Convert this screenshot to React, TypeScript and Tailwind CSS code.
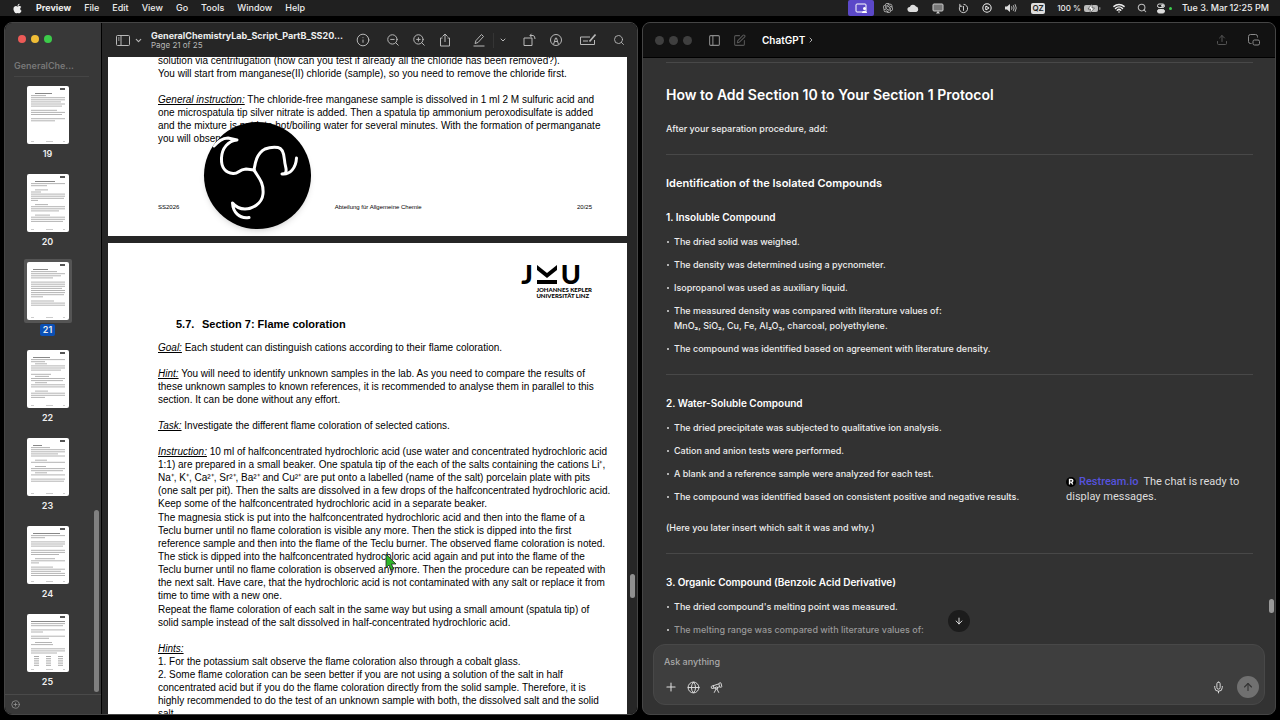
import React, { useState } from "react";
import {
  ArrowDown,
  ArrowUp,
  ChevronDown,
  ChevronRight,
  CirclePlus,
  CirclePlay,
  Globe,
  Info,
  Mic,
  PanelLeft,
  Plus,
  Search,
  SquarePen,
  Telescope,
  Upload,
  Wifi,
  ZoomIn,
  ZoomOut,
} from "lucide-react";
import { FaApple } from "react-icons/fa";
import { RiOpenaiFill } from "react-icons/ri";

const menus = ["File", "Edit", "View", "Go", "Tools", "Window", "Help"];

// Each row is [indent, width], stacked from the top of the miniature page
const thumbs: { page: number; rows: number[][] }[] = [
  { page: 19, rows: [[8, 17], [4, 15], [4, 34], [4, 34], [4, 30], [4, 34], [4, 31], [0, 0], [4, 26], [4, 34], [4, 31], [0, 0], [4, 34], [4, 24]] },
  { page: 20, rows: [[8, 20], [4, 34], [4, 16], [0, 0], [8, 13], [4, 10], [4, 34], [4, 34], [4, 33], [4, 7], [0, 0], [8, 13], [4, 34], [4, 34], [4, 28], [0, 0], [8, 15], [4, 34], [4, 34], [4, 32]] },
  { page: 21, rows: [[6, 15], [4, 26], [4, 34], [4, 30], [4, 22], [0, 0], [4, 34], [4, 34], [4, 34], [4, 31], [4, 34], [4, 34], [4, 33], [4, 12], [0, 0], [4, 23], [4, 34], [4, 34]] },
  { page: 22, rows: [[6, 17], [4, 34], [4, 14], [8, 12], [4, 34], [4, 34], [4, 30], [0, 0], [4, 20], [8, 14], [4, 34], [4, 32], [8, 12], [4, 34], [4, 34], [0, 0], [8, 13], [4, 34], [4, 34], [4, 14]] },
  { page: 23, rows: [[6, 9], [4, 19], [4, 34], [4, 34], [4, 27], [4, 34], [0, 0], [8, 12], [4, 34], [0, 0], [8, 11], [4, 34], [4, 32], [8, 12], [4, 34], [0, 0], [4, 34], [4, 33]] },
  { page: 24, rows: [[6, 27], [4, 34], [4, 14], [0, 0], [4, 34], [4, 34], [4, 32], [0, 0], [4, 34], [4, 34], [4, 28], [0, 0], [8, 20], [4, 34], [4, 8], [0, 0], [4, 22], [4, 34], [4, 30], [4, 34], [4, 34]] },
  { page: 25, rows: [[4, 34], [4, 34], [4, 32], [0, 0], [4, 34], [4, 12], [0, 0], [4, 34], [4, 18], [0, 0], [8, 17], [4, 22], [0, 0], [4, 34], [4, 34], [4, 26]] },
];

function Thumb({ page, rows }: { page: number; rows: number[][] }) {
  return (
    <svg className="block h-[58px] w-[42px] rounded-xs bg-white" viewBox="0 0 42 58">
      <rect x="33" y="2" width="5" height="2" fill="#555" />
      {rows.map(([x, w], i) => (
        <rect key={i} x={x} y={7 + i * 2.1} width={w} height="1" fill={i === 0 ? "#888" : "#b4b4b4"} />
      ))}
      {page === 25 &&
        [7, 19, 31].map((x) =>
          [0, 1, 2, 3, 4].map((i) => (
            <rect key={`${x}-${i}`} x={x} y={42 + i * 2.2} width="5" height="1" fill="#aaa" />
          ))
        )}
      <rect x="4" y="55" width="3" height="1" fill="#ccc" />
      <rect x="19" y="55" width="7" height="1" fill="#ccc" />
      <rect x="36" y="55" width="2" height="1" fill="#ccc" />
    </svg>
  );
}

function MenuBar() {
  return (
    <header className="flex h-4 shrink-0 items-center justify-between bg-[#202020] pr-[11px] pl-3 text-[9px] leading-4 font-medium text-[#eee]">
      <nav className="flex items-center gap-[13px]">
        <button aria-label="Apple menu">
          <FaApple className="size-[11px]" />
        </button>
        <button className="font-bold">Preview</button>
        {menus.map((m) => (
          <button key={m}>{m}</button>
        ))}
      </nav>
      <div className="flex items-center">
        <button aria-label="Screen sharing" className="flex h-4 w-[26px] items-center justify-center rounded-xs bg-[#5b48c8]">
          <svg className="h-3 w-3" viewBox="0 0 12 12" fill="none">
            <rect x="1" y="2" width="10" height="8" rx="1" stroke="#fff" />
            <circle cx="9.500" cy="6.500" r="1.500" fill="#fff" />
            <path d="M7 11c0-3 5-3 5 0z" fill="#fff" />
          </svg>
        </button>
        <span className="flex w-[27px] justify-center"><RiOpenaiFill className="size-[12px] text-[#ccc]" /></span>
        <span className="flex w-6 justify-center">
          <svg className="h-[10px] w-3" viewBox="0 0 12 10">
            <path d="M3 9a2.500 2.500 0 0 1-.2-5A3.400 3.400 0 0 1 9 3.600A2.800 2.800 0 0 1 9.300 9z" fill="#ddd" />
          </svg>
        </span>
        <span className="flex w-[26px] justify-center">
          <svg className="h-[11px] w-3" viewBox="0 0 12 11">
            <rect x="1" y="1" width="10" height="7" rx="1" fill="#777" stroke="#ccc" />
            <path d="M4 10.500L6 8l2 2.500z" fill="#ccc" />
          </svg>
        </span>
        <span className="flex w-6 justify-center">
          <svg className="size-[11px]" viewBox="0 0 12 12" fill="none" stroke="#ddd">
            <path d="M2.600 3A4.500 4.500 0 1 0 6 1.500M2 1v2.500h2.500" />
            <path d="M6 3.500v5M5 4.500l1-1" />
          </svg>
        </span>
        <span className="flex w-6 justify-center"><CirclePlay className="size-[10px]" strokeWidth={2.5} /></span>
        <span className="flex w-6 justify-center">
          <svg className="h-[10px] w-3" viewBox="0 0 12 10" fill="none" stroke="#ddd">
            <path d="M0 3.500h2L5 1v8L2 6.500H0z" fill="#ddd" stroke="none" />
            <path d="M6.500 3.300q1 1.700 0 3.400M8.300 2.200q1.700 2.800 0 5.600M10 1.200q2.500 3.800 0 7.600" strokeWidth=".8" />
          </svg>
        </span>
        <span className="ml-2 flex h-[11px] w-[14px] items-center justify-center rounded-xs bg-[#ddd] text-[8px] leading-none font-semibold text-[#222]">
          QZ
        </span>
        <span className="ml-3 text-[8px]">100 %</span>
        <svg className="ml-[3px] h-[9px] w-[17px]" viewBox="0 0 17 9">
          <rect x="0" y="1" width="14" height="7" rx="2" fill="#bbb" />
          <rect x="15" y="3" width="1.500" height="3" rx=".7" fill="#777" />
          <path d="M8 0L4 5h2.500L6 9l4.500-5H8z" fill="#fff" stroke="#333" strokeWidth=".6" />
        </svg>
        <Wifi className="ml-3 size-3" strokeWidth={3} />
        <Search className="ml-3 size-[10px] text-[#bbb]" strokeWidth={2.5} />
        <svg className="ml-[10px] h-[11px] w-2" viewBox="0 0 8 11" fill="none" stroke="#ddd">
          <rect x=".5" y="1" width="7" height="3.500" rx="1.700" />
          <circle cx="5.500" cy="2.700" r="1" fill="#ddd" />
          <rect x=".5" y="6.500" width="7" height="3.500" rx="1.700" fill="#ddd" />
        </svg>
        <span className="ml-1 size-[3px] rounded-full bg-[#3ccf4e]" />
        <time className="ml-[10px] flex gap-[2px]">
          <span>Tue 3. Mar</span>
          <span>12:25 PM</span>
        </time>
      </div>
    </header>
  );
}

function Sidebar() {
  const [selected, setSelected] = useState(21);
  return (
    <aside className="relative flex w-[97px] shrink-0 flex-col border-r border-black bg-[#383838]">
      <div className="flex gap-[5px] px-[13px] pt-3">
        <button aria-label="Close" className="size-2 rounded-full bg-[#ec5a57]" />
        <button aria-label="Minimise" className="size-2 rounded-full bg-[#f0bd36]" />
        <button aria-label="Zoom" className="size-2 rounded-full bg-[#3ccb4a]" />
      </div>
      <div className="mt-[17px] mr-3 ml-[9px] border-b border-[#454545] pb-1 text-[9px] leading-3 font-semibold text-[#777]">
        GeneralChe...
      </div>
      <ol className="flex min-h-0 flex-1 flex-col items-center overflow-hidden pt-[6px] pr-[11px]">
        {thumbs.map((t) => (
          <li key={t.page}>
            <button onClick={() => setSelected(t.page)} className="flex h-[88px] flex-col items-center">
              <span className={`rounded-xs p-[3px] ${selected === t.page ? "bg-[#555]" : ""}`}>
                <Thumb {...t} />
              </span>
              <span
                className={`mt-px rounded-xs px-[3px] text-[9px] leading-3 font-semibold text-[#eee] ${
                  selected === t.page ? "bg-[#0b50b5]" : ""
                }`}
              >
                {t.page}
              </span>
            </button>
          </li>
        ))}
      </ol>
      <div className="absolute right-[2px] bottom-[22px] h-[182px] w-[5px] rounded-full bg-[#808080]" />
      <footer className="flex h-5 shrink-0 items-center border-t border-[#4a4a4a] px-[6px]">
        <button aria-label="Add page">
          <CirclePlus className="size-[9px] text-[#999]" />
        </button>
      </footer>
    </aside>
  );
}

function PreviewToolbar() {
  return (
    <div className="flex h-[34px] shrink-0 items-center bg-[#262626] pr-3 pl-[14px] text-[#b8b8b8]">
      <button aria-label="Sidebar">
        <svg className="h-[11px] w-[14px]" viewBox="0 0 14 11" fill="none" stroke="currentColor">
          <rect x=".5" y=".5" width="13" height="10" rx="1" />
          <path d="M5 .5v10M2 3h1.500M2 5h1.500" />
        </svg>
      </button>
      <ChevronDown className="ml-1 size-[9px]" strokeWidth={3} />
      <div className="ml-2 min-w-0">
        <h1 className="text-[9px] leading-[11px] font-bold text-[#eee]">GeneralChemistryLab_Script_PartB_SS20...</h1>
        <p className="text-[8px] leading-[9px]">Page 21 of 25</p>
      </div>
      <div className="ml-auto flex items-center">
        <button aria-label="Info"><Info className="size-[14px]" strokeWidth={1.7} /></button>
        <button aria-label="Zoom out" className="ml-4"><ZoomOut className="size-[14px]" strokeWidth={1.7} /></button>
        <button aria-label="Zoom in" className="ml-3"><ZoomIn className="size-[14px]" strokeWidth={1.7} /></button>
        <button aria-label="Share" className="ml-3">
          <svg className="size-[14px]" viewBox="0 0 14 14" fill="none" stroke="currentColor">
            <path d="M4.500 5H2.500v8h9V5h-2M7 9V1M4.500 3.500L7 1l2.500 2.500" />
          </svg>
        </button>
        <button aria-label="Highlight" className="ml-5">
          <svg className="size-[14px]" viewBox="0 0 14 14" fill="none" stroke="currentColor">
            <path d="M4 7.500L9.500 1.500l2 2L6 9.500l-3 1zM1.500 13h11" />
          </svg>
        </button>
        <span className="ml-[7px] h-[15px] w-px bg-[#353535]" />
        <ChevronDown className="ml-[5px] size-2" strokeWidth={3} />
        <button aria-label="Rotate" className="ml-4">
          <svg className="size-[14px]" viewBox="0 0 14 14" fill="none" stroke="currentColor">
            <path d="M1 5h8v7.500h-8zM7 2.500h3q2 0 2 3.500M8.500 .8L7 2.500l1.500 1.700" />
          </svg>
        </button>
        <button aria-label="Markup" className="ml-3">
          <svg className="size-[14px]" viewBox="0 0 14 14" fill="none" stroke="currentColor">
            <circle cx="7" cy="7" r="5.500" />
            <path d="M4.500 11.500L6.500 5h1l2 6.500M5.500 8.500h3" />
          </svg>
        </button>
        <button aria-label="Fill form" className="ml-4">
          <svg className="h-[14px] w-[18px]" viewBox="0 0 18 14" fill="none" stroke="currentColor">
            <path d="M11 4H1.500v7.500h14V7M4 8h5" />
            <path d="M16.500 1.500L10.500 8.500" strokeWidth="1.700" />
          </svg>
        </button>
        <button aria-label="Search" className="ml-4"><Search className="size-[12px]" strokeWidth={1.8} /></button>
      </div>
    </div>
  );
}

const Label = ({ children }: { children: React.ReactNode }) => (
  <em className="underline">{children}</em>
);

function Monogram() {
  return (
    <svg
      className="absolute bottom-[7px] left-24 size-[107px] rounded-full bg-black shadow-md"
      viewBox="0 0 107 107"
      fill="none"
      stroke="#fff"
      strokeWidth="3"
      strokeLinecap="round"
      strokeLinejoin="round"
    >
      <path d="M10 24C14 20 18 16 24 16L33 18C24 19 18 26 17.500 36C17 46 22 51 29 51.500C35 52 34 47.500 42 47L50 48" />
      <path d="M50 48C51 42 52 32 61 27C66 25 70 25 74 25.500C78 26 80 32 80.500 38C81 46 84 48 81 51.500L78 52C86 53 92 46 92.500 36" />
      <path d="M50 48C54 55 60 60 59 72C58 82 48 87 41 87C35 87 31 84 28.500 81C29 90 35 97 45 95.500" />
    </svg>
  );
}

function PdfPages() {
  return (
    <div className="relative flex min-h-0 flex-1 flex-col gap-[7px] overflow-hidden bg-[#262626] pr-[10px] pl-[6px] font-['Liberation_Sans',sans-serif] text-[10px] leading-[13px] whitespace-nowrap text-black">
      <section className="relative flex h-[179px] shrink-0 flex-col justify-between overflow-hidden bg-white px-[50px] pb-[22px]">
        <div className="-mt-[3px]">
          <p>
            solution via centrifugation (how can you test if already all the chloride has been removed?).<br />
            You will start from manganese(II) chloride (sample), so you need to remove the chloride first.
          </p>
          <p className="mt-[13px]">
            <Label>General instruction:</Label> The chloride-free manganese sample is dissolved in 1 ml 2 M sulfuric acid and<br />
            one microspatula tip silver nitrate is added. Then a spatula tip ammonium peroxodisulfate is added<br />
            and the mixture is put into hot/boiling water for several minutes. With the formation of permanganate<br />
            you will observe a violet color.
          </p>
        </div>
        <footer className="-mr-[15px] flex justify-between text-[6px] leading-[14px]">
          <span>SS2026</span>
          <span>Abteilung für Allgemeine Chemie</span>
          <span>20/25</span>
        </footer>
        <Monogram />
      </section>

      <section className="shrink-0 bg-white pt-[18px] pr-[35px] pl-[50px]">
        <div className="flex flex-col items-end font-['Lato',sans-serif]">
          <div className="mr-[11px] flex h-[26px] items-center gap-1 text-[27px] leading-6 font-black">
            <span>J</span>
            <svg className="h-[19px] w-5" viewBox="0 0 20 19">
              <path d="M0 0L10 8L20 0V5L10 13L0 5zM0 15h20v4H0z" />
            </svg>
            <span>U</span>
          </div>
          <div className="text-[6px] leading-[6px] font-black">
            <div>JOHANNES KEPLER</div>
            <div>UNIVERSITÄT LINZ</div>
          </div>
        </div>
        <h2 className="mt-[17px] pl-[18px] text-[11px] leading-4 font-bold">
          <span className="inline-block w-[26px]">5.7.</span>Section 7: Flame coloration
        </h2>
        <p className="mt-[9px]"><Label>Goal:</Label> Each student can distinguish cations according to their flame coloration.</p>
        <p className="mt-[13px]">
          <Label>Hint:</Label> You will need to identify unknown samples in the lab. As you need to compare the results of<br />
          these unknown samples to known references, it is recommended to analyse them in parallel to this<br />
          section. It can be done without any effort.
        </p>
        <p className="mt-[13px]"><Label>Task:</Label> Investigate the different flame coloration of selected cations.</p>
        <p className="mt-[13px]">
          <Label>Instruction:</Label> 10 ml of halfconcentrated hydrochloric acid (use water and concentrated hydrochloric acid<br />
          1:1) are prepared in a small beaker. One spatula tip of the each of the salts containing the cations Li⁺,<br />
          Na⁺, K⁺, Ca²⁺, Sr²⁺, Ba²⁺ and Cu²⁺ are put onto a labelled (name of the salt) porcelain plate with pits<br />
          (one salt per pit). Then the salts are dissolved in a few drops of the halfconcentrated hydrochloric acid.<br />
          Keep some of the halfconcentrated hydrochloric acid in a separate beaker.
        </p>
        <p className="mt-px">
          The magnesia stick is put into the halfconcentrated hydrochloric acid and then into the flame of a<br />
          Teclu burner until no flame coloration is visible any more. Then the stick is dipped into the first<br />
          reference sample and then into the flame of the Teclu burner. The observed flame coloration is noted.<br />
          The stick is dipped into the halfconcentrated hydrochloric acid again and put into the flame of the<br />
          Teclu burner until no flame coloration is observed anymore. Then the procedure can be repeated with<br />
          the next salt. Have care, that the hydrochloric acid is not contaminated with any salt or replace it from<br />
          time to time with a new one.
        </p>
        <p className="mt-px">
          Repeat the flame coloration of each salt in the same way but using a small amount (spatula tip) of<br />
          solid sample instead of the salt dissolved in half-concentrated hydrochloric acid.
        </p>
        <p className="mt-[13px]">
          <Label>Hints:</Label><br />
          1. For the potassium salt observe the flame coloration also through a cobalt glass.<br />
          2. Some flame coloration can be seen better if you are not using a solution of the salt in half<br />
          concentrated acid but if you do the flame coloration directly from the solid sample. Therefore, it is<br />
          highly recommended to do the test of an unknown sample with both, the dissolved salt and the solid<br />
          salt.
        </p>
      </section>
      <div className="absolute right-[2px] bottom-[116px] h-6 w-[5px] rounded-full bg-[#909090]" />
      <svg className="absolute top-[496px] left-[283px] h-[18px] w-3" viewBox="0 0 12 18">
        <path d="M1 1v14l3-3 2 5 2.500-1L6.500 11H11z" fill="#2fb52a" stroke="#222" strokeWidth=".8" />
      </svg>
    </div>
  );
}

function Bullet({ children }: { children: React.ReactNode }) {
  return (
    <li className="flex gap-[5px]">
      <span className="mt-[7px] ml-px size-[2px] shrink-0 rounded-full bg-[#ddd]" />
      <span>{children}</span>
    </li>
  );
}

function ChatWindow() {
  const [prompt, setPrompt] = useState("");
  return (
    <section className="relative flex min-w-0 flex-1 flex-col overflow-hidden rounded-lg border border-[#454545] bg-[#323232]">
      <div className="flex h-[35px] shrink-0 items-center border-b border-black bg-[#121212] pr-[15px] pl-3 text-[#8a8a8a]">
        <div className="flex gap-[5px]">
          <button aria-label="Close chat" className="size-[9px] rounded-full bg-[#3f3f3f]" />
          <button aria-label="Minimise chat" className="size-[9px] rounded-full bg-[#3f3f3f]" />
          <button aria-label="Zoom chat" className="size-[9px] rounded-full bg-[#3f3f3f]" />
        </div>
        <button aria-label="Toggle sidebar" className="ml-4"><PanelLeft className="size-[13px]" strokeWidth={2} /></button>
        <button aria-label="New chat" className="ml-3 text-[#555]"><SquarePen className="size-[13px]" strokeWidth={2} /></button>
        <button className="ml-4 flex items-center gap-[2px] text-[10px] font-semibold text-white">
          ChatGPT
          <ChevronRight className="size-2 text-[#aaa]" strokeWidth={3} />
        </button>
        <button aria-label="Share chat" className="ml-auto text-[#555]"><Upload className="size-3" strokeWidth={2} /></button>
        <button aria-label="Companion window" className="ml-5">
          <svg className="size-3" viewBox="0 0 12 12" fill="none" stroke="currentColor">
            <path d="M3.500 9.500H2.500a2 2 0 0 1-2-2v-5a2 2 0 0 1 2-2h5a2 2 0 0 1 2 2v1" />
            <rect x="5" y="6" width="6.500" height="5" rx="1.500" />
          </svg>
        </button>
      </div>

      <div className="relative min-h-0 flex-1 overflow-hidden pr-[22px] pl-[23px] text-[9px] leading-[15px] font-medium text-[#eee]">
        <hr className="mt-1 border-[#484848]" />
        <h1 className="mt-[22px] text-[14px] leading-5 font-semibold text-white">How to Add Section 10 to Your Section 1 Protocol</h1>
        <p className="mt-4">After your separation procedure, add:</p>
        <hr className="mt-[18px] border-[#484848]" />
        <h2 className="mt-5 text-[11px] leading-4 font-semibold text-white">Identification of the Isolated Compounds</h2>
        <h3 className="mt-[18px] text-[10px] leading-4 font-semibold text-white">1. Insoluble Compound</h3>
        <ul className="mt-[9px] flex flex-col gap-2">
          <Bullet>The dried solid was weighed.</Bullet>
          <Bullet>The density was determined using a pycnometer.</Bullet>
          <Bullet>Isopropanol was used as auxiliary liquid.</Bullet>
          <Bullet>
            The measured density was compared with literature values of:<br />
            MnO₂, SiO₂, Cu, Fe, Al₂O₃, charcoal, polyethylene.
          </Bullet>
          <Bullet>The compound was identified based on agreement with literature density.</Bullet>
        </ul>
        <hr className="mt-[18px] border-[#484848]" />
        <h3 className="mt-5 text-[10px] leading-4 font-semibold text-white">2. Water-Soluble Compound</h3>
        <ul className="mt-[9px] flex flex-col gap-2">
          <Bullet>The dried precipitate was subjected to qualitative ion analysis.</Bullet>
          <Bullet>Cation and anion tests were performed.</Bullet>
          <Bullet>A blank and a reference sample were analyzed for each test.</Bullet>
          <Bullet>The compound was identified based on consistent positive and negative results.</Bullet>
        </ul>
        <p className="mt-4">(Here you later insert which salt it was and why.)</p>
        <hr className="mt-[18px] border-[#484848]" />
        <h3 className="mt-5 text-[10px] leading-4 font-semibold text-white">3. Organic Compound (Benzoic Acid Derivative)</h3>
        <ul className="mt-[9px] flex flex-col gap-2">
          <Bullet>The dried compound's melting point was measured.</Bullet>
          <Bullet><span className="text-[#999]">The melting range was compared with literature values of:</span></Bullet>
        </ul>
        <div className="absolute right-px bottom-[27px] h-[14px] w-[5px] rounded-full bg-[#999]" />
        <button aria-label="Scroll to bottom" className="absolute bottom-2 left-1/2 -ml-[11px] flex size-[22px] items-center justify-center rounded-full bg-[#1c1c1c] text-white">
          <ArrowDown className="size-[10px]" />
        </button>
      </div>

      <form className="mx-[10px] mt-1 mb-[9px] shrink-0 rounded-xl border border-[#484848] bg-[#3e3e3e] pt-2 pr-[5px] pb-[6px] pl-[10px]" onSubmit={(e) => e.preventDefault()}>
        <input
          aria-label="Message"
          value={prompt}
          onChange={(e) => setPrompt(e.target.value)}
          placeholder="Ask anything"
          className="block h-4 w-full bg-transparent text-[9px] font-medium text-white outline-none placeholder:text-[#aaa]"
        />
        <div className="mt-[7px] flex items-center text-[#ddd]">
          <button type="button" aria-label="Attach"><Plus className="size-[14px]" strokeWidth={1.8} /></button>
          <button type="button" aria-label="Search the web" className="ml-[9px]"><Globe className="size-[13px]" strokeWidth={1.8} /></button>
          <button type="button" aria-label="Deep research" className="ml-[10px]"><Telescope className="size-[13px]" strokeWidth={1.8} /></button>
          <button type="button" aria-label="Dictate" className="ml-auto"><Mic className="size-[13px]" strokeWidth={1.8} /></button>
          <button aria-label="Send" className="ml-3 flex size-[22px] items-center justify-center rounded-full bg-[#707070] text-[#333]">
            <ArrowUp className="size-3" strokeWidth={2.2} />
          </button>
        </div>
      </form>

      <div className="absolute right-[28px] bottom-[210px] flex w-[181px] gap-[3px] font-['Roboto',sans-serif] text-[11px] leading-[15px] text-[#ddd]">
        <p className="w-full">
          <svg className="mr-[3px] inline-block size-[10px] align-middle" viewBox="0 0 10 10">
            <circle cx="5" cy="5" r="5" fill="#000" />
            <path d="M3.500 7.500v-5h2a1.300 1.300 0 0 1 0 2.700h-2M5.300 5.200l1.500 2.300" fill="none" stroke="#fff" strokeWidth="1.300" />
          </svg>
          <span className="mr-[5px] font-medium text-[#5652dd]">Restream.io</span>
          The chat is ready to display messages.
        </p>
      </div>
    </section>
  );
}

export default function App() {
  return (
    <div className="flex h-screen flex-col overflow-hidden bg-black font-['Inter',sans-serif]">
      <MenuBar />
      <main className="flex min-h-0 flex-1 gap-1 px-1 pt-[6px] pb-[5px]">
        <section className="flex min-w-0 flex-1 overflow-hidden rounded-lg border border-[#454545]">
          <Sidebar />
          <div className="flex min-w-0 flex-1 flex-col">
            <PreviewToolbar />
            <PdfPages />
          </div>
        </section>
        <ChatWindow />
      </main>
    </div>
  );
}
